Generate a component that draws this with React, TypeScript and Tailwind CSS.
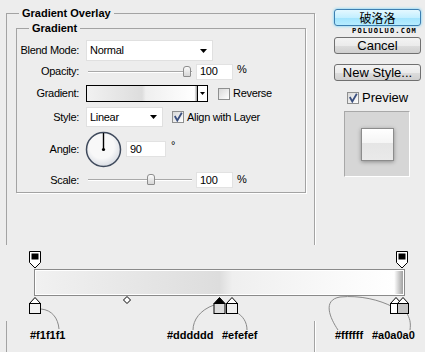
import React from "react";

const barFill =
  "bg-[linear-gradient(to_right,#f1f1f1_0%,#dddddd_50%,#efefef_53.5%,#ffffff_97.6%,#a0a0a0_100%)]";

function Arrow() {
  return (
    <svg width="7" height="4" viewBox="0 0 7 4">
      <path d="M0 0h7L3.5 4z" fill="#000" />
    </svg>
  );
}

function Label({ text }: { text: string }) {
  return <div className="w-[63px] shrink-0 text-right pr-[1px]">{text}</div>;
}

function Checkbox({ checked }: { checked?: boolean }) {
  return (
    <div className="w-[12px] h-[12px] shrink-0 border border-[#8e8f8f] bg-[linear-gradient(135deg,#d8d8d8,#ffffff)] flex items-center justify-center">
      {checked && (
        <svg width="10" height="10" viewBox="0 0 10 10">
          <path d="M1.8 4 L4.3 8.5 L8.8 0.8" fill="none" stroke="#3a4f7f" strokeWidth="1.8" />
        </svg>
      )}
    </div>
  );
}

function Slider({ thumb }: { thumb: string }) {
  return (
    <div className="relative ml-[2px] w-[104px] h-[14px]">
      <div className="absolute left-0 right-0 top-[6px] h-[2px] border-t border-t-[#a9a9a9] border-b border-b-white" />
      <div
        className={`absolute top-[1px] ${thumb} w-[8px] h-[11px] rounded-t-[3px] rounded-b-[1px] border border-[#8d8d8d] bg-[linear-gradient(#fbfbfb,#d6d6d6)]`}
      />
    </div>
  );
}

function NumBox({ value, w }: { value: string; w: string }) {
  return (
    <div className={`${w} h-[16px] bg-white border border-[#e2e2e2] pl-[3px] flex items-center`}>
      {value}
    </div>
  );
}

function Button({ children, glow }: { children: React.ReactNode; glow?: boolean }) {
  return (
    <div
      className={
        glow
          ? "w-[87px] h-[17px] rounded-[3px] border border-[#3c7fb1] bg-[linear-gradient(#e4f8ff,#c4efff_50%,#a2e4fd_51%,#b6ecff)] shadow-[0_0_3px_#5ccfff] flex items-center justify-center"
          : "w-[87px] h-[17px] rounded-[3px] border border-[#707070] bg-[linear-gradient(#f3f3f3,#ebebeb_50%,#dddddd_51%,#cfcfcf)] flex items-center justify-center"
      }
    >
      {children}
    </div>
  );
}

function TopStop({ x }: { x: number }) {
  return (
    <g>
      <path d={`M${x - 5.5} 251.5 h11 v11 l-5.5 5.5 l-5.5 -5.5 z`} fill="#ffffff" stroke="#000" />
      <rect x={x - 3.5} y={253.5} width={7} height={6} fill="#000" />
    </g>
  );
}

function BottomStop({ x, color, selected }: { x: number; color: string; selected?: boolean }) {
  return (
    <g>
      <path d={`M${x - 5.5} 303.5 l5.5 -6 l5.5 6 z`} fill={selected ? "#000" : "#fff"} stroke="#000" />
      <rect x={x - 5.5} y={303.5} width={11} height={10} fill={color} stroke="#000" />
    </g>
  );
}

export default function App() {
  return (
    <div className="relative w-[425px] h-[352px] overflow-hidden bg-[#ededed] text-[11px] leading-[13px] text-black font-['Liberation_Sans',Arial,sans-serif]">
      <div className="flex items-start">
        {/* layer style panel */}
        <fieldset className="ml-[6px] mt-[7px] w-[309px] h-[400px] border border-[#a3a3a3] shadow-[1px_1px_0_#fff]">
          <legend className="ml-[12px] px-[3px] font-bold leading-[13px]">Gradient Overlay</legend>
          <fieldset className="ml-[9px] mt-[2px] w-[290px] border border-[#a3a3a3] shadow-[1px_1px_0_#fff] pb-[4px] tracking-[-0.3px]">
            <legend className="ml-[12px] px-[3px] font-bold leading-[13px] tracking-normal">Gradient</legend>

            <div className="mt-[5px] h-[21px] flex items-center">
              <Label text="Blend Mode:" />
              <div className="ml-[6px] w-[127px] h-full flex items-center justify-between bg-white border border-[#e0e0e0] pl-[3px] pr-[5px]">
                <span>Normal</span>
                <Arrow />
              </div>
            </div>

            <div className="mt-[2px] h-[17px] flex items-center">
              <Label text="Opacity:" />
              <div className="ml-[6px] flex items-center">
                <Slider thumb="left-[95px]" />
                <div className="ml-[4px]">
                  <NumBox value="100" w="w-[37px]" />
                </div>
                <span className="ml-[4px] -mt-[4px]">%</span>
              </div>
            </div>

            <div className="mt-[5px] h-[17px] flex items-center">
              <Label text="Gradient:" />
              <div className="ml-[6px] w-[122px] h-full flex border border-black">
                <div className={`flex-1 ${barFill}`} />
                <div className="w-[10px] border-l border-black bg-white flex items-center justify-center">
                  <svg width="5" height="3" viewBox="0 0 5 3">
                    <path d="M0 0h5L2.5 3z" fill="#000" />
                  </svg>
                </div>
              </div>
              <div className="ml-[10px] flex items-center gap-[3px]">
                <Checkbox />
                <span>Reverse</span>
              </div>
            </div>

            <div className="mt-[5px] h-[20px] flex items-center">
              <Label text="Style:" />
              <div className="ml-[6px] w-[77px] h-full flex items-center justify-between bg-white border border-[#e0e0e0] pl-[3px] pr-[5px]">
                <span>Linear</span>
                <Arrow />
              </div>
              <div className="ml-[9px] flex items-center gap-[3px]">
                <Checkbox checked />
                <span>Align with Layer</span>
              </div>
            </div>

            <div className="mt-[3px] h-[38px] flex items-center">
              <Label text="Angle:" />
              <div className="ml-[5px] flex items-center">
                <svg width="37" height="37" viewBox="0 0 37 37">
                  <defs>
                    <radialGradient id="dial" cx="0.45" cy="0.4" r="0.6">
                      <stop offset="0.6" stopColor="#f8f8f8" />
                      <stop offset="1" stopColor="#d9dde4" />
                    </radialGradient>
                  </defs>
                  <circle cx="18.5" cy="18.5" r="17" fill="url(#dial)" stroke="#3f4a5c" strokeWidth="1.5" />
                  <line x1="18.5" y1="18.5" x2="18.5" y2="2" stroke="#000" strokeWidth="1.4" />
                  <circle cx="18.5" cy="18.5" r="1.6" fill="#000" />
                </svg>
                <div className="ml-[4px]">
                  <NumBox value="90" w="w-[40px]" />
                </div>
                <span className="ml-[5px] -mt-[8px]">°</span>
              </div>
            </div>

            <div className="mt-[4px] h-[16px] flex items-center">
              <Label text="Scale:" />
              <div className="ml-[6px] flex items-center">
                <Slider thumb="left-[59px]" />
                <div className="ml-[4px]">
                  <NumBox value="100" w="w-[37px]" />
                </div>
                <span className="ml-[4px] -mt-[2px]">%</span>
              </div>
            </div>
          </fieldset>
        </fieldset>

        {/* dialog buttons */}
        <div className="ml-[19px] mt-[9px] flex flex-col text-[13px] leading-[15px]">
          <Button glow>
            <span className="font-['Noto_Sans_CJK_SC',sans-serif] text-[12px] leading-[14px]">破洛洛</span>
          </Button>
          <div className="mt-[2px] h-[7px] pr-[4px] text-right font-['DejaVu_Sans_Mono',monospace] font-bold text-[7px] leading-[7px] tracking-[1.2px]">
            POLUOLUO.COM
          </div>
          <div className="mt-[2px]">
            <Button>Cancel</Button>
          </div>
          <div className="mt-[10px]">
            <Button>New Style...</Button>
          </div>
          <div className="mt-[10px] ml-[13px] h-[13px] flex items-center gap-[3px]">
            <Checkbox checked />
            <span>Preview</span>
          </div>
          <div className="ml-[10px] mt-[7px] w-[66px] h-[66px] bg-[#d6d6d6] border border-[#a8a8a8] border-r-white border-b-white flex items-center justify-center">
            <div className="w-[33px] h-[33px] border border-[#8c8c8c] bg-[linear-gradient(#ffffff,#f5f5f5_44%,#e5e5e5_46%,#eaeaea)] shadow-[0_1px_4px_rgba(0,0,0,0.35)]" />
          </div>
        </div>
      </div>

      {/* gradient editor strip pasted over the panel */}
      <div className="absolute left-0 top-[243px] w-[425px] h-[109px]">
        <div className="mt-[2px] h-[76px] bg-[#ededed] pt-[24px] pl-[34px]">
          <div className="w-[371px] h-[27px] border border-[#8a8a8a] p-[1px] bg-white">
            <div className={`w-full h-full ${barFill}`} />
          </div>
        </div>
        <svg className="absolute inset-0" width="425" height="109" viewBox="0 243 425 109">
          <g fill="none" stroke="#8a8a8a" strokeWidth="1">
            <path d="M41 309 C52 310 58 318 59 329" />
            <path d="M214 305 C200 310 193 320 193 330" />
            <path d="M236 312 C243 316 247 322 247 330" />
            <path d="M338 330 C330 318 322 300 340 297 C360 295 380 300 393 307" />
            <path d="M406 312 C410 318 411 323 410 330" />
          </g>
          <TopStop x={35} />
          <TopStop x={402} />
          <path d="M127 296.5 l3.5 3.5 l-3.5 3.5 l-3.5 -3.5 z" fill="#fff" stroke="#000" />
          <BottomStop x={35} color="#f1f1f1" />
          <BottomStop x={219.5} color="#dddddd" selected />
          <BottomStop x={232} color="#efefef" />
          <BottomStop x={396} color="#ffffff" />
          <BottomStop x={403} color="#c4c4c4" />
        </svg>
        <div className="absolute top-[86px] left-[30px] font-bold">#f1f1f1</div>
        <div className="absolute top-[86px] left-[167px] font-bold">#dddddd</div>
        <div className="absolute top-[86px] left-[222px] font-bold">#efefef</div>
        <div className="absolute top-[86px] left-[335px] font-bold">#ffffff</div>
        <div className="absolute top-[86px] left-[372px] font-bold">#a0a0a0</div>
      </div>
    </div>
  );
}
